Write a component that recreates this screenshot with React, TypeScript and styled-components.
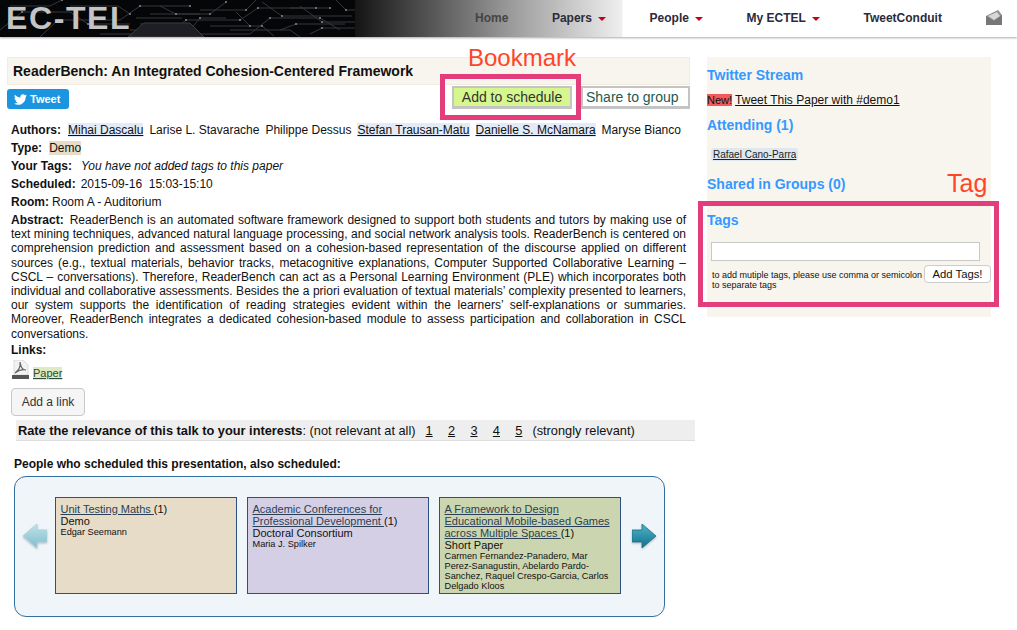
import React from "react";
import styled, { createGlobalStyle } from "styled-components";
import { FaTwitter } from "react-icons/fa";

const GlobalStyle = createGlobalStyle`
    html, body {
        margin: 0;
        padding: 0;
        background: #fff;
    }
    body {
        font-family: "Liberation Sans", Arial, sans-serif;
        font-size: 12px;
        color: #111;
    }
`;

const Page = styled.div`
    position: relative;
    width: 1017px;
    height: 630px;
    overflow: hidden;
`;

const Header = styled.header`
    display: flex;
    align-items: center;
    height: 37px;
    background: linear-gradient(90deg, #141414 355px, #9a9a9a 510px, #efefef 622px, #fff 623px);
    box-shadow: 0 1px 2px #aaa;
`;

const Brand = styled.div`
    position: relative;
    flex: none;
    width: 355px;
    height: 37px;
    background: #050608;
    overflow: hidden;
`;

const Circuit = styled.svg`
    display: block;
`;

const Logo = styled.div`
    position: absolute;
    left: 6px;
    top: 0;
    font-size: 32px;
    line-height: 37px;
    font-weight: bold;
    letter-spacing: 1.6px;
    color: #c4c4c4;
`;

const Nav = styled.nav`
    display: flex;
    align-items: center;
    gap: 43.6px;
    margin-left: 120px;
    padding-bottom: 2px;
`;

const NavItem = styled.a<{ $muted?: boolean }>`
    display: flex;
    align-items: center;
    gap: 6px;
    font-size: 12px;
    font-weight: bold;
    color: ${(p) => (p.$muted ? "#444" : "#2b2b3a")};
`;

const Caret = styled.span`
    width: 0;
    height: 0;
    margin-top: 2px;
    border-left: 4px solid transparent;
    border-right: 4px solid transparent;
    border-top: 4px solid #c4001a;
`;

const Main = styled.main`
    display: flex;
    align-items: flex-start;
    gap: 17px;
    padding: 20px 0 0 7px;
`;

const Left = styled.section`
    flex: none;
    width: 683px;
`;

const TitleBar = styled.h1`
    box-sizing: border-box;
    height: 28px;
    margin: 0;
    padding: 0 5px;
    font-size: 14px;
    line-height: 27px;
    font-weight: bold;
    background: #f8f5ee;
    border: 1px solid #f4ecdf;
`;

const ActionRow = styled.div`
    display: flex;
    align-items: flex-start;
    justify-content: space-between;
    height: 35px;
    padding-top: 1px;
`;

const TweetButton = styled.a`
    display: flex;
    align-items: center;
    gap: 3px;
    box-sizing: border-box;
    width: 62px;
    height: 20px;
    margin-top: 3px;
    padding-left: 7px;
    font-size: 11px;
    font-weight: bold;
    color: #fff;
    background: #1b95e0;
    border-radius: 3px;
`;

const ActionGroup = styled.div`
    display: flex;
    gap: 9px;
`;

const ActionButton = styled.button<{ $on?: boolean }>`
    box-sizing: border-box;
    height: 23px;
    font-family: inherit;
    font-size: 14px;
    width: ${(p) => (p.$on ? "120px" : "109px")};
    padding: ${(p) => (p.$on ? "0" : "0 0 0 3px")};
    text-align: ${(p) => (p.$on ? "center" : "left")};
    color: ${(p) => (p.$on ? "#333" : "#1e5a50")};
    background: ${(p) => (p.$on ? "#d6f78f" : "#fff")};
    border-style: solid;
    border-color: #c4c4c4;
    border-width: 2px 2px 3px 2px;
`;

const Details = styled.div`
    padding-left: 4px;
`;

const Field = styled.div`
    min-height: 18px;
    line-height: 18px;
    white-space: nowrap;
`;

const Label = styled.b<{ $gap: number }>`
    margin-right: ${(p) => p.$gap}px;
`;

const Person = styled.span<{ $linked?: boolean }>`
    margin-right: 6px;
    text-decoration: ${(p) => (p.$linked ? "underline" : "none")};
    background: ${(p) => (p.$linked ? "#e2ebf7" : "transparent")};
`;

const TypeChip = styled.span`
    background: #e8dcc8;
`;

const Abstract = styled.p`
    margin: 0;
    padding-top: 2px;
    width: 675px;
    line-height: 14.2px;
    text-align: justify;
`;

const LinksHead = styled.div`
    margin-top: 2px;
    font-weight: bold;
    line-height: 14px;
`;

const PaperRow = styled.div`
    display: flex;
    align-items: flex-end;
    gap: 4px;
    height: 23px;
    padding-left: 1px;
`;

const PaperLink = styled.a`
    font-size: 11px;
    line-height: 13px;
    color: #2c4a3a;
    text-decoration: underline;
    background: #dcebc3;
`;

const AddLink = styled.button`
    display: block;
    box-sizing: border-box;
    width: 74px;
    height: 28px;
    margin-top: 8px;
    padding: 0;
    font-family: inherit;
    font-size: 12px;
    color: #333;
    background: #f5f5f5;
    border: 1px solid #c8c8c8;
    border-radius: 4px;
`;

const RateBar = styled.div`
    display: flex;
    align-items: center;
    box-sizing: border-box;
    width: 679px;
    height: 21px;
    margin: 4px 0 0 9px;
    padding: 1px 0 0 2px;
    font-size: 12.8px;
    background: #eee;
    border-bottom: 1px solid #ddd;
    white-space: pre;
`;

const RateNumbers = styled.span`
    display: flex;
    gap: 15.3px;
    margin: 0 10px;
    text-decoration: underline;
`;

const AlsoHead = styled.div`
    margin: 16px 0 0 7px;
    font-weight: bold;
    line-height: 14px;
`;

const Carousel = styled.div`
    display: flex;
    align-items: flex-start;
    box-sizing: border-box;
    width: 651px;
    height: 141px;
    margin: 5px 0 0 7px;
    padding: 20px 0 0 8px;
    background: #f0f5fa;
    border: 1px solid #34709f;
    border-radius: 12px;
`;

const ArrowIcon = styled.svg`
    flex: none;
    margin-top: 27px;
    filter: drop-shadow(0 1px 1px rgba(0, 0, 0, 0.25));
`;

const Cards = styled.div`
    display: flex;
    gap: 10px;
    margin: 0 11px 0 8px;
`;

const Card = styled.div<{ $bg: string }>`
    box-sizing: border-box;
    width: 182px;
    height: 97px;
    padding: 5px 4.5px 0;
    font-size: 11px;
    line-height: 12px;
    background: ${(p) => p.$bg};
    border: 1px solid #2c5080;
`;

const CardTitle = styled.a`
    color: #2b3f55;
    text-decoration: underline;
`;

const CardAuthors = styled.div`
    font-size: 9.2px;
    line-height: 10px;
`;

const Right = styled.aside`
    flex: none;
    box-sizing: border-box;
    width: 284px;
    height: 260px;
    padding-top: 10px;
    background: #f8f5ee;
`;

const SideHead = styled.h2<{ $gap: number }>`
    margin: 0 0 ${(p) => p.$gap}px;
    font-size: 14px;
    line-height: 16px;
    font-weight: bold;
    color: #3399ff;
`;

const TweetLine = styled.div`
    height: 24px;
    line-height: 14px;
    margin-top: 10px;
`;

const NewTag = styled.span`
    margin-right: 3px;
    font-size: 11px;
    background: #f55a5a;
`;

const TweetLink = styled.a`
    text-decoration: underline;
`;

const Chip = styled.a`
    display: block;
    width: fit-content;
    margin: 0 0 15px 4px;
    padding: 1px 2px;
    font-size: 10px;
    line-height: 11px;
    color: #222;
    text-decoration: underline;
    background: #dfe8ee;
    border-radius: 3px;
`;

const TagInput = styled.input`
    display: block;
    box-sizing: border-box;
    width: 269px;
    height: 19px;
    margin-left: 4px;
    background: #fff;
    border: 1px solid #c8c8c8;
`;

const TagRow = styled.div`
    display: flex;
    align-items: flex-start;
    justify-content: space-between;
    margin: 4px 0 0 5px;
`;

const Hint = styled.div`
    width: 212px;
    margin-top: 5px;
    font-size: 9px;
    line-height: 10px;
`;

const AddTags = styled.button`
    box-sizing: border-box;
    width: 67px;
    height: 18px;
    padding: 0;
    font-family: inherit;
    font-size: 11.3px;
    color: #111;
    background: #fff;
    border: 1px solid #ccc;
    border-radius: 4px;
`;

const Callout = styled.div<{ $x: number; $y: number; $size: number }>`
    position: absolute;
    left: ${(p) => p.$x}px;
    top: ${(p) => p.$y}px;
    font-size: ${(p) => p.$size}px;
    line-height: 28px;
    color: #ff4528;
`;

const HighlightBox = styled.div<{ $x: number; $y: number; $w: number; $h: number }>`
    position: absolute;
    box-sizing: border-box;
    left: ${(p) => p.$x}px;
    top: ${(p) => p.$y}px;
    width: ${(p) => p.$w}px;
    height: ${(p) => p.$h}px;
    border: 5px solid #e33d7c;
`;

const traces = [
    "M0 30L22 12H70L88 24H130", "M40 37L58 20H120L140 6H190", "M100 34H170L186 20H240L258 8H330",
    "M140 24H178L196 37", "M150 14H210L226 2", "M196 34H250L270 18H320L340 30", "M230 30H290L300 37",
    "M262 2L282 16H352", "M130 30H190L200 18H226", "M300 6L322 22H355", "M10 6H50L62 0", "M70 6H118L130 14",
    "M160 6L176 14H200", "M280 30L296 24H345", "M200 10H246L256 0", "M210 26H262L274 36", "M310 34L322 28H355",
    "M336 0L346 10H355", "M236 12L250 26", "M136 18H182", "M290 8H316",
];

const dots = [[22, 12], [88, 24], [140, 6], [186, 20], [258, 8], [226, 2], [270, 18], [282, 16], [322, 22], [200, 18], [62, 0], [130, 14], [176, 14], [296, 24], [330, 8], [320, 18], [240, 20], [190, 6], [210, 14], [246, 10], [262, 26], [322, 28], [346, 10], [250, 26], [316, 8]];

function CircuitArt() {
    return (
        <Circuit width="355" height="37" viewBox="0 0 355 37">
            <g fill="none" stroke="#34373c" strokeWidth="1">
                {traces.map((d) => <path key={d} d={d} />)}
            </g>
            <path d="M128 37L144 23H190L204 37Z" fill="#1d1f24" stroke="#3a3d42" />
            <g fill="#7d8a96">
                {dots.map(([x, y]) => <circle key={x + "-" + y} cx={x} cy={y} r="1" />)}
            </g>
        </Circuit>
    );
}

function Envelope() {
    return (
        <svg width="18" height="16" viewBox="0 0 18 16">
            <path d="M1 6L13 0L17 5V15H1Z" fill="#8f8f8f" />
            <path d="M3 6L12 2L15 6L9 10Z" fill="#d8d8d8" />
            <path d="M1 6L9 11L17 5V15H1Z" fill="#777" />
        </svg>
    );
}

function PdfIcon() {
    return (
        <svg width="17" height="20" viewBox="0 0 17 20">
            <path d="M2 0H11L16 5V15H2Z" fill="#f2f2f2" stroke="#c8c8c8" strokeWidth="0.6" />
            <path d="M8 2C9 7 7 10 3 13C7 10 10 9 14 10C10 10 9 7 8 2Z" fill="none" stroke="#666" strokeWidth="1.2" />
            <rect x="0" y="15" width="17" height="4" fill="#555" />
        </svg>
    );
}

function Arrow({ dir }: { dir: "left" | "right" }) {
    const id = "arrow-" + dir;
    const light = dir === "left";
    return (
        <ArrowIcon width="24" height="24" viewBox="0 0 24 24">
            <defs>
                <linearGradient id={id} x1="0" y1="0" x2="0" y2="1">
                    <stop offset="0" stopColor={light ? "#bfe3ea" : "#4fb4c8"} />
                    <stop offset="1" stopColor={light ? "#7fbccb" : "#11708c"} />
                </linearGradient>
            </defs>
            <path
                d={light ? "M0 12L14 0V6H24V18H14V24Z" : "M24 12L10 0V6H0V18H10V24Z"}
                fill={`url(#${id})`}
                stroke={light ? "#a9d2dc" : "#1a6f88"}
                strokeWidth="0.8"
            />
        </ArrowIcon>
    );
}

export default function App() {
    return (
        <Page>
            <GlobalStyle />
            <Header>
                <Brand>
                    <CircuitArt />
                    <Logo>EC-TEL</Logo>
                </Brand>
                <Nav>
                    <NavItem $muted>Home</NavItem>
                    <NavItem>Papers <Caret /></NavItem>
                    <NavItem>People <Caret /></NavItem>
                    <NavItem>My ECTEL <Caret /></NavItem>
                    <NavItem>TweetConduit</NavItem>
                    <Envelope />
                </Nav>
            </Header>

            <Main>
                <Left>
                    <TitleBar>ReaderBench: An Integrated Cohesion-Centered Framework</TitleBar>
                    <ActionRow>
                        <TweetButton><FaTwitter size={13} /> Tweet</TweetButton>
                        <ActionGroup>
                            <ActionButton $on>Add to schedule</ActionButton>
                            <ActionButton>Share to group</ActionButton>
                        </ActionGroup>
                    </ActionRow>
                    <Details>
                        <Field>
                            <Label $gap={7}>Authors:</Label>
                            <Person $linked>Mihai Dascalu</Person>
                            <Person>Larise L. Stavarache</Person>
                            <Person>Philippe Dessus</Person>
                            <Person $linked>Stefan Trausan-Matu</Person>
                            <Person $linked>Danielle S. McNamara</Person>
                            <Person>Maryse Bianco</Person>
                        </Field>
                        <Field><Label $gap={7}>Type:</Label><TypeChip>Demo</TypeChip></Field>
                        <Field><Label $gap={9}>Your Tags:</Label><i>You have not added tags to this paper</i></Field>
                        <Field><Label $gap={5}>Scheduled:</Label>2015-09-16&nbsp; 15:03-15:10</Field>
                        <Field><Label $gap={3}>Room:</Label>Room A - Auditorium</Field>
                        <Abstract>
                            <Label $gap={6}>Abstract:</Label>ReaderBench is an automated software framework designed to support both students and tutors by making use of text mining techniques, advanced natural language processing, and social network analysis tools. ReaderBench is centered on comprehension prediction and assessment based on a cohesion-based representation of the discourse applied on different sources (e.g., textual materials, behavior tracks, metacognitive explanations, Computer Supported Collaborative Learning – CSCL – conversations). Therefore, ReaderBench can act as a Personal Learning Environment (PLE) which incorporates both individual and collaborative assessments. Besides the a priori evaluation of textual materials’ complexity presented to learners, our system supports the identification of reading strategies evident within the learners’ self-explanations or summaries. Moreover, ReaderBench integrates a dedicated cohesion-based module to assess participation and collaboration in CSCL conversations.
                        </Abstract>
                        <LinksHead>Links:</LinksHead>
                        <PaperRow><PdfIcon /><PaperLink>Paper</PaperLink></PaperRow>
                        <AddLink>Add a link</AddLink>
                    </Details>
                    <RateBar>
                        <b>Rate the relevance of this talk to your interests</b>: (not relevant at all)
                        <RateNumbers><span>1</span><span>2</span><span>3</span><span>4</span><span>5</span></RateNumbers>
                        (strongly relevant)
                    </RateBar>
                    <AlsoHead>People who scheduled this presentation, also scheduled:</AlsoHead>
                    <Carousel>
                        <Arrow dir="left" />
                        <Cards>
                            <Card $bg="#e6dcc8">
                                <CardTitle>Unit Testing Maths </CardTitle>(1)
                                <div>Demo</div>
                                <CardAuthors>Edgar Seemann</CardAuthors>
                            </Card>
                            <Card $bg="#d5cfe6">
                                <CardTitle>Academic Conferences for Professional Development </CardTitle>(1)
                                <div>Doctoral Consortium</div>
                                <CardAuthors>Maria J. Spilker</CardAuthors>
                            </Card>
                            <Card $bg="#cbd6b0">
                                <CardTitle>A Framework to Design Educational Mobile-based Games across Multiple Spaces </CardTitle>(1)
                                <div>Short Paper</div>
                                <CardAuthors>Carmen Fernandez-Panadero, Mar Perez-Sanagustin, Abelardo Pardo-Sanchez, Raquel Crespo-Garcia, Carlos Delgado Kloos</CardAuthors>
                            </Card>
                        </Cards>
                        <Arrow dir="right" />
                    </Carousel>
                </Left>

                <Right>
                    <SideHead $gap={0}>Twitter Stream</SideHead>
                    <TweetLine><NewTag>New!</NewTag><TweetLink>Tweet This Paper with #demo1</TweetLink></TweetLine>
                    <SideHead $gap={15}>Attending (1)</SideHead>
                    <Chip>Rafael Cano-Parra</Chip>
                    <SideHead $gap={20}>Shared in Groups (0)</SideHead>
                    <SideHead $gap={14}>Tags</SideHead>
                    <TagInput />
                    <TagRow>
                        <Hint>to add mutiple tags, please use comma or semicolon to separate tags</Hint>
                        <AddTags>Add Tags!</AddTags>
                    </TagRow>
                </Right>
            </Main>

            <Callout $x={468} $y={44} $size={24}>Bookmark</Callout>
            <HighlightBox $x={440} $y={74} $w={141} $h={46} />
            <Callout $x={947} $y={169} $size={25}>Tag</Callout>
            <HighlightBox $x={698} $y={201} $w={301} $h={106} />
        </Page>
    );
}
